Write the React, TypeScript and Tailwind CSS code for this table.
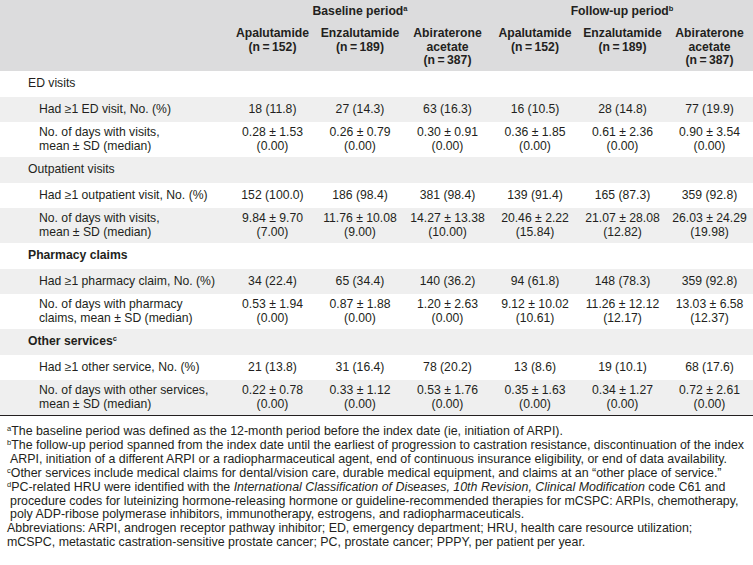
import React from "react";

type Row =
  | { kind: "section"; label: React.ReactNode; bold?: boolean }
  | { kind: "single"; label: string; vals: string[] }
  | { kind: "double"; label: [string, string]; vals: [string, string][] };

const Sup = ({ c }: { c: string }) => (
  <sup className="text-[7.5px] leading-none relative -top-[4px] align-baseline">{c}</sup>
);

const rows: Row[] = [
  { kind: "section", label: "ED visits" },
  { kind: "single", label: "Had ≥1 ED visit, No. (%)", vals: ["18 (11.8)", "27 (14.3)", "63 (16.3)", "16 (10.5)", "28 (14.8)", "77 (19.9)"] },
  {
    kind: "double",
    label: ["No. of days with visits,", "mean ± SD (median)"],
    vals: [
      ["0.28 ± 1.53", "(0.00)"],
      ["0.26 ± 0.79", "(0.00)"],
      ["0.30 ± 0.91", "(0.00)"],
      ["0.36 ± 1.85", "(0.00)"],
      ["0.61 ± 2.36", "(0.00)"],
      ["0.90 ± 3.54", "(0.00)"],
    ],
  },
  { kind: "section", label: "Outpatient visits" },
  { kind: "single", label: "Had ≥1 outpatient visit, No. (%)", vals: ["152 (100.0)", "186 (98.4)", "381 (98.4)", "139 (91.4)", "165 (87.3)", "359 (92.8)"] },
  {
    kind: "double",
    label: ["No. of days with visits,", "mean ± SD (median)"],
    vals: [
      ["9.84 ± 9.70", "(7.00)"],
      ["11.76 ± 10.08", "(9.00)"],
      ["14.27 ± 13.38", "(10.00)"],
      ["20.46 ± 2.22", "(15.84)"],
      ["21.07 ± 28.08", "(12.82)"],
      ["26.03 ± 24.29", "(19.98)"],
    ],
  },
  { kind: "section", label: "Pharmacy claims", bold: true },
  { kind: "single", label: "Had ≥1 pharmacy claim, No. (%)", vals: ["34 (22.4)", "65 (34.4)", "140 (36.2)", "94 (61.8)", "148 (78.3)", "359 (92.8)"] },
  {
    kind: "double",
    label: ["No. of days with pharmacy", "claims, mean ± SD (median)"],
    vals: [
      ["0.53 ± 1.94", "(0.00)"],
      ["0.87 ± 1.88", "(0.00)"],
      ["1.20 ± 2.63", "(0.00)"],
      ["9.12 ± 10.02", "(10.61)"],
      ["11.26 ± 12.12", "(12.17)"],
      ["13.03 ± 6.58", "(12.37)"],
    ],
  },
  {
    kind: "section",
    label: (
      <>
        Other services<Sup c="c" />
      </>
    ),
    bold: true,
  },
  { kind: "single", label: "Had ≥1 other service, No. (%)", vals: ["21 (13.8)", "31 (16.4)", "78 (20.2)", "13 (8.6)", "19 (10.1)", "68 (17.6)"] },
  {
    kind: "double",
    label: ["No. of days with other services,", "mean ± SD (median)"],
    vals: [
      ["0.22 ± 0.78", "(0.00)"],
      ["0.33 ± 1.12", "(0.00)"],
      ["0.53 ± 1.76", "(0.00)"],
      ["0.35 ± 1.63", "(0.00)"],
      ["0.34 ± 1.27", "(0.00)"],
      ["0.72 ± 2.61", "(0.00)"],
    ],
  },
];

const N = (n: string) => `(n\u2009=\u2009${n})`;

export default function App() {
  return (
    <div
      className="w-[753px] h-[565px] bg-white text-[#231f20] overflow-hidden"
      style={{ fontFamily: '"Liberation Sans", Arial, sans-serif' }}
    >
      <table className="table-fixed border-collapse w-[753px] text-[12.2px] leading-[13.5px]">
        <colgroup>
          <col className="w-[229px]" />
          <col className="w-[87px]" />
          <col className="w-[88px]" />
          <col className="w-[87px]" />
          <col className="w-[88px]" />
          <col className="w-[87px]" />
          <col className="w-[87px]" />
        </colgroup>
        <thead className="bg-[#dcdcdd] font-bold">
          <tr className="h-[22px]">
            <th></th>
            <th colSpan={3} className="text-center align-middle pt-[1px]">
              Baseline period<Sup c="a" />
            </th>
            <th colSpan={3} className="text-center align-middle pt-[1px]">
              Follow-up period<Sup c="b" />
            </th>
          </tr>
          <tr className="h-[49px]">
            <th></th>
            <th className="align-top text-center pt-[5px]">Apalutamide<br />{N("152")}</th>
            <th className="align-top text-center pt-[5px]">Enzalutamide<br />{N("189")}</th>
            <th className="align-top text-center pt-[5px]">Abiraterone<br />acetate<br />{N("387")}</th>
            <th className="align-top text-center pt-[5px]">Apalutamide<br />{N("152")}</th>
            <th className="align-top text-center pt-[5px]">Enzalutamide<br />{N("189")}</th>
            <th className="align-top text-center pt-[5px]">Abiraterone<br />acetate<br />{N("387")}</th>
          </tr>
        </thead>
        <tbody>
          {rows.map((r, i) => {
            const bg = i % 2 === 1 ? "bg-[#efefef]" : "bg-white";
            if (r.kind === "section") {
              return (
                <tr key={i} className={`${bg} h-[25.5px]`}>
                  <td colSpan={7} className={`pl-[28px] align-middle ${r.bold ? "font-bold" : ""}`}>
                    {r.label}
                  </td>
                </tr>
              );
            }
            if (r.kind === "single") {
              return (
                <tr key={i} className={`${bg} h-[25.5px]`}>
                  <td className="pl-[39px] align-middle whitespace-nowrap">{r.label}</td>
                  {r.vals.map((v, j) => (
                    <td key={j} className="text-center align-middle whitespace-nowrap">{v}</td>
                  ))}
                </tr>
              );
            }
            return (
              <tr key={i} className={`${bg} h-[35px]`}>
                <td className="pl-[39px] align-middle whitespace-nowrap">
                  {r.label[0]}
                  <br />
                  {r.label[1]}
                </td>
                {r.vals.map((v, j) => (
                  <td key={j} className="text-center align-middle whitespace-nowrap">
                    {v[0]}
                    <br />
                    {v[1]}
                  </td>
                ))}
              </tr>
            );
          })}
        </tbody>
      </table>
      <div className="border-t border-[#231f20] pt-[9px] pl-[7px] text-[12.4px] leading-[13.9px] whitespace-nowrap">
        <div className="pl-[3px] [text-indent:-3px]">
          <Sup c="a" />The baseline period was defined as the 12-month period before the index date (ie, initiation of ARPI).
        </div>
        <div className="pl-[3px] [text-indent:-3px]">
          <Sup c="b" />The follow-up period spanned from the index date until the earliest of progression to castration resistance, discontinuation of the index
          <br />
          ARPI, initiation of a different ARPI or a radiopharmaceutical agent, end of continuous insurance eligibility, or end of data availability.
        </div>
        <div className="pl-[3px] [text-indent:-3px]">
          <Sup c="c" />Other services include medical claims for dental/vision care, durable medical equipment, and claims at an “other place of service.”
        </div>
        <div className="pl-[3px] [text-indent:-3px]">
          <Sup c="d" />PC-related HRU were identified with the <i>International Classification of Diseases, 10th Revision, Clinical Modification</i> code C61 and
          <br />
          procedure codes for luteinizing hormone-releasing hormone or guideline-recommended therapies for mCSPC: ARPIs, chemotherapy,
          <br />
          poly ADP-ribose polymerase inhibitors, immunotherapy, estrogens, and radiopharmaceuticals.
        </div>
        <div>
          Abbreviations: ARPI, androgen receptor pathway inhibitor; ED, emergency department; HRU, health care resource utilization;
          <br />
          mCSPC, metastatic castration-sensitive prostate cancer; PC, prostate cancer; PPPY, per patient per year.
        </div>
      </div>
    </div>
  );
}
